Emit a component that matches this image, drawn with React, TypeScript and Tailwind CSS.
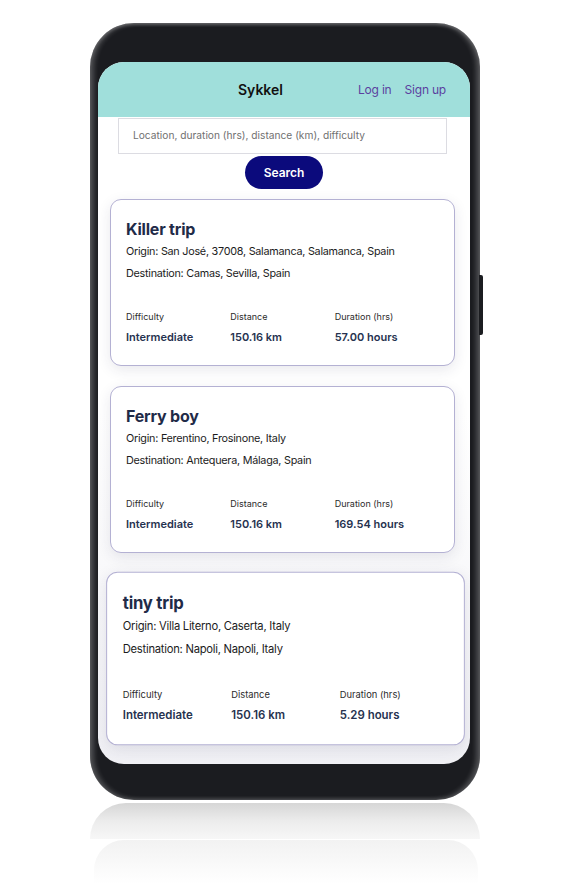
import React from 'react';

type Trip = {
    title: string;
    origin: string;
    destination: string;
    difficulty: string;
    distance: string;
    duration: string;
};

const trips: Trip[] = [
    {
        title: 'Killer trip',
        origin: 'San José, 37008, Salamanca, Salamanca, Spain',
        destination: 'Camas, Sevilla, Spain',
        difficulty: 'Intermediate',
        distance: '150.16 km',
        duration: '57.00 hours',
    },
    {
        title: 'Ferry boy',
        origin: 'Ferentino, Frosinone, Italy',
        destination: 'Antequera, Málaga, Spain',
        difficulty: 'Intermediate',
        distance: '150.16 km',
        duration: '169.54 hours',
    },
    {
        title: 'tiny trip',
        origin: 'Villa Literno, Caserta, Italy',
        destination: 'Napoli, Napoli, Italy',
        difficulty: 'Intermediate',
        distance: '150.16 km',
        duration: '5.29 hours',
    },
];

function TripCard({ trip, hovered }: { trip: Trip; hovered?: boolean }) {
    return (
        <div
            className={
                'bg-white border border-[#b4b1d3] rounded-[11px] px-[15px] pt-[18px] pb-[18px] shadow-[0_4px_14px_rgba(40,40,80,0.10)] ' +
                (hovered ? 'scale-[1.04] translate-x-[3px] translate-y-[2px]' : '')
            }
        >
            <h3 className="text-[16px] leading-[22px] font-bold tracking-[-0.2px] text-[#1f2b48]">{trip.title}</h3>
            <p className="text-[10.8px] leading-[22px] tracking-[-0.25px] text-[#1c1c1c] mt-[1px]">Origin: {trip.origin}</p>
            <p className="text-[10.8px] leading-[22px] tracking-[-0.25px] text-[#1c1c1c]">Destination: {trip.destination}</p>

            {/* Stats */}
            <div className="grid grid-cols-3 mt-[24px]">
                <div>
                    <div className="text-[9px] leading-[16px] text-[#2b2b2b]">Difficulty</div>
                    <div className="text-[11px] leading-[20px] mt-[2px] font-semibold text-[#26324f]">{trip.difficulty}</div>
                </div>
                <div>
                    <div className="text-[9px] leading-[16px] text-[#2b2b2b]">Distance</div>
                    <div className="text-[11px] leading-[20px] mt-[2px] font-semibold text-[#26324f]">{trip.distance}</div>
                </div>
                <div>
                    <div className="text-[9px] leading-[16px] text-[#2b2b2b]">Duration (hrs)</div>
                    <div className="text-[11px] leading-[20px] mt-[2px] font-semibold text-[#26324f]">{trip.duration}</div>
                </div>
            </div>
        </div>
    );
}

export default function App() {
    return (
        <div className="w-[561px] h-[885px] bg-white overflow-hidden pt-[23px] pl-[90px] font-['Inter',sans-serif]">
            {/* Phone */}
            <div className="relative w-[390px] h-[777px] rounded-[44px] bg-[#1b1c20] pt-[39px] pl-[8px] pr-[10px] pb-[36px] shadow-[inset_4px_0_5px_rgba(255,255,255,0.22),inset_-4px_0_5px_rgba(255,255,255,0.22),inset_0_2px_3px_rgba(255,255,255,0.15)]">
                {/* side button */}
                <div className="absolute right-[-3px] top-[252px] w-[4px] h-[60px] rounded-r-[2px] bg-[#1b1c20]" />

                {/* Screen */}
                <div className="h-full rounded-[26px] overflow-hidden bg-gradient-to-b from-white via-white to-[#f1f1f5]">
                    {/* Header */}
                    <div className="h-[55px] bg-[#a0dfdb] flex items-center">
                        <span className="ml-[140px] text-[14px] font-semibold text-[#111]">Sykkel</span>
                        <div className="ml-auto pr-[24px] flex gap-[13px] text-[12px] tracking-[-0.2px] text-[#5b3f9f]">
                            <span>Log in</span>
                            <span>Sign up</span>
                        </div>
                    </div>

                    {/* Search */}
                    <div className="flex flex-col items-center">
                        <div className="w-[329px] h-[36px] mt-[1px] mr-[3px] border border-[#dcdce2] bg-white flex items-center px-[14px] text-[10.2px] text-[#707070]">
                            Location, duration (hrs), distance (km), difficulty
                        </div>
                        <button className="mt-[2px] w-[78px] h-[33px] rounded-full bg-[#0b0a7c] text-white text-[12px] font-semibold">
                            Search
                        </button>
                    </div>

                    {/* Trips */}
                    <div className="pl-[12px] pr-[15px] mt-[10px] flex flex-col gap-[20px]">
                        {trips.map((trip, i) => (
                            <TripCard key={trip.title} trip={trip} hovered={i === 2} />
                        ))}
                    </div>
                </div>
            </div>

            {/* Reflection */}
            <div className="mt-[3px] w-[390px] h-[36px] rounded-t-[40px] bg-gradient-to-b from-[#d6d6d6] via-[#ececec] to-[#f7f7f7]" />
            <div className="mt-[1px] ml-[4px] w-[384px] h-[44px] rounded-t-[30px] bg-gradient-to-b from-[#f2f2f2] to-white" />
        </div>
    );
}
